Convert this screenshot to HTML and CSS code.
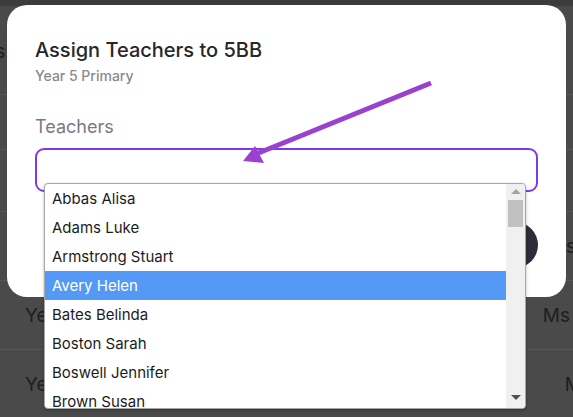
FILE: index.html
```html
<!DOCTYPE html>
<html>
<head>
<meta charset="utf-8">
<link rel="stylesheet" href="styles.css">
</head>
<body>
<div class="page">
  <div class="topbar"></div>
  <div class="row row-head"><span class="cell-left head-left">Class:</span></div>
  <div class="row row-a"></div>
  <div class="row row-b"></div>
  <div class="row row-c"><span class="cell-right c-right">s</span></div>
  <div class="row row-d"><span class="cell-left">Year 5</span><span class="cell-right d-right">Ms</span></div>
  <div class="row row-d"><span class="cell-left">Year 5</span><span class="cell-right e-right">Mr</span></div>
</div>

<div class="modal">
  <h1 class="title">Assign Teachers to 5BB</h1>
  <div class="subtitle">Year 5 Primary</div>
  <div class="label">Teachers</div>
  <div class="input"></div>
  <div class="actions"><div class="btn"></div></div>
</div>

<div class="listbox">
  <div class="options">
    <div class="opt">Abbas Alisa</div>
    <div class="opt">Adams Luke</div>
    <div class="opt">Armstrong Stuart</div>
    <div class="opt sel">Avery Helen</div>
    <div class="opt">Bates Belinda</div>
    <div class="opt">Boston Sarah</div>
    <div class="opt">Boswell Jennifer</div>
    <div class="opt">Brown Susan</div>
  </div>
  <div class="scrollbar">
    <div class="arrow-up"></div>
    <div class="thumb"></div>
    <div class="track"></div>
    <div class="arrow-down"></div>
  </div>
</div>

<svg class="pointer" width="573" height="417" viewBox="0 0 573 417">
  <line x1="431" y1="83" x2="256" y2="154" stroke="#9b41cf" stroke-width="5"/>
  <polygon points="243,161 255,146 264,163" fill="#9b41cf"/>
</svg>
</body>
</html>
```
FILE: styles.css
```css
html, body {
  margin: 0;
  padding: 0;
}
body {
  width: 573px;
  height: 417px;
  overflow: hidden;
  background: #4a4a4a;
  font-family: Inter, "Noto Sans", sans-serif;
  position: relative;
}
.page {
  display: flex;
  flex-direction: column;
}
.topbar {
  height: 6px;
  background: #3c3c3c;
}
.row {
  display: flex;
  align-items: center;
  border-bottom: 1px solid #565656;
  color: #1e1e22;
  font-size: 19px;
  white-space: nowrap;
  flex: none;
}
.row-head { height: 88px; }
.row-a { height: 54px; }
.row-b { height: 61px; }
.row-c { height: 68px; }
.row-d { height: 68px; }
.cell-left { margin-left: 25px; }
.cell-right { margin-left: auto; }
.head-left { margin-left: -44px; margin-top: 2px; }
.c-right { margin-right: -3px; margin-top: 0; }
.d-right { margin-right: 3px; }
.e-right { margin-right: -16px; }

.modal {
  position: absolute;
  left: 7px;
  top: 5px;
  width: 559px;
  height: 292px;
  box-sizing: border-box;
  background: #ffffff;
  border-radius: 20px;
  padding: 33px 28px 0 28px;
  display: flex;
  flex-direction: column;
}
.title {
  margin: 0;
  font-size: 20px;
  line-height: 24px;
  font-weight: 500;
  color: #27272a;
}
.subtitle {
  margin-top: 5px;
  font-size: 14px;
  line-height: 18px;
  font-weight: 500;
  color: #8a8a8e;
}
.label {
  margin-top: 31px;
  font-size: 18px;
  line-height: 22px;
  color: #7a7a7e;
}
.input {
  margin-top: 10px;
  height: 44px;
  box-sizing: border-box;
  border: 2px solid #7c3aed;
  border-radius: 9px;
}
.actions {
  display: flex;
  justify-content: flex-end;
  margin-top: 30px;
}
.btn {
  width: 110px;
  height: 46px;
  border-radius: 23px;
  background: #2d2c38;
}

.listbox {
  position: absolute;
  left: 44px;
  top: 183px;
  width: 482px;
  height: 226px;
  box-sizing: border-box;
  background: #ffffff;
  border: 1px solid #a6a6a6;
  border-radius: 4px;
  box-shadow: 0 1px 3px rgba(0,0,0,0.3);
  display: flex;
  overflow: hidden;
}
.options {
  flex: 1;
  display: flex;
  flex-direction: column;
}
.opt {
  height: 29px;
  flex: none;
  line-height: 29px;
  padding-left: 7px;
  font-size: 15px;
  color: #1c1c1c;
}
.sel {
  background: #5599f7;
  color: #ffffff;
}
.scrollbar {
  width: 19px;
  background: #f0f0f0;
  display: flex;
  flex-direction: column;
  align-items: center;
}
.arrow-up {
  margin-top: 5px;
  width: 0;
  height: 0;
  border-left: 5px solid transparent;
  border-right: 5px solid transparent;
  border-bottom: 5px solid #a3a3a3;
}
.thumb {
  margin-top: 6px;
  width: 15px;
  height: 27px;
  background: #c1c1c1;
}
.track { flex: 1; }
.arrow-down {
  margin-bottom: 8px;
  width: 0;
  height: 0;
  border-left: 5px solid transparent;
  border-right: 5px solid transparent;
  border-top: 5px solid #505050;
}
.pointer {
  position: absolute;
  left: 0;
  top: 0;
}
```
